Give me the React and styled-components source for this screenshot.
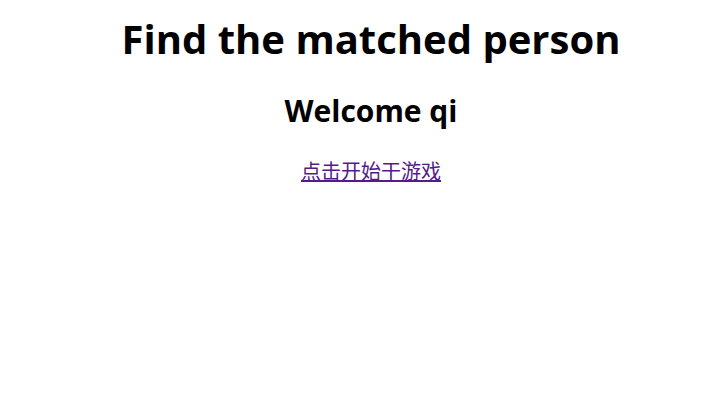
import styled, { createGlobalStyle } from "styled-components"

const GlobalStyle = createGlobalStyle`
    body {
        margin: 0;
        background: #fff;
        font-family: "Open Sans", "Noto Sans CJK SC", sans-serif;
    }
`

const Page = styled.div`
    display: flex;
    flex-direction: column;
    align-items: center;
    padding: 12px 0 0 22px;
`

const Title = styled.h1`
    font-size: 40px;
    font-weight: bold;
    margin: 0;
    line-height: 54px;
    color: #000;
`

const Welcome = styled.h2`
    font-size: 30px;
    font-weight: bold;
    margin: 25px 0 0;
    line-height: 40px;
    color: #000;
`

const StartLink = styled.a`
    font-family: "Noto Sans CJK SC", sans-serif;
    font-size: 20px;
    line-height: 32px;
    margin-top: 24px;
    color: #551a8b;
    text-decoration: underline;
`

export default () => {
    return (
        <Page>
            <GlobalStyle/>
            <Title>Find the matched person</Title>
            <Welcome>Welcome qi</Welcome>
            <StartLink href="#game">点击开始干游戏</StartLink>
        </Page>
    )
};
